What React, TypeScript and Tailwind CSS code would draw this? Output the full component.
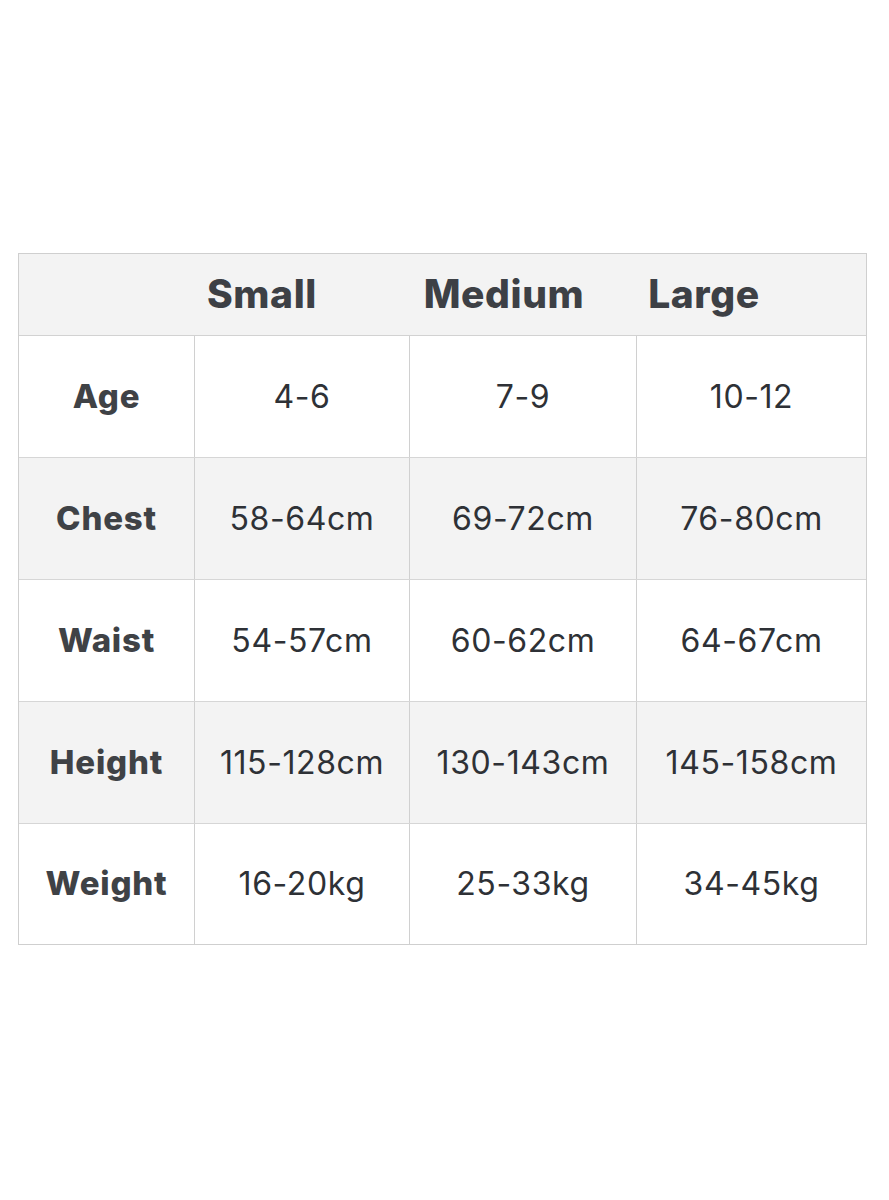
const headers = [
  { label: '', w: 'w-[122px]' },
  { label: 'Small', w: 'w-[242px]' },
  { label: 'Medium', w: 'w-[242px]' },
  { label: 'Large', w: 'w-[158px]' }
]

const rows = [
  { name: 'Age', values: ['4-6', '7-9', '10-12'] },
  { name: 'Chest', values: ['58-64cm', '69-72cm', '76-80cm'] },
  { name: 'Waist', values: ['54-57cm', '60-62cm', '64-67cm'] },
  { name: 'Height', values: ['115-128cm', '130-143cm', '145-158cm'] },
  { name: 'Weight', values: ['16-20kg', '25-33kg', '34-45kg'] }
]

const App = () => {
  return (
    <div
      className="w-[889px] h-[1200px] bg-white pt-[253px] pl-[18px]"
      style={{ fontFamily: 'Inter, "Open Sans", sans-serif' }}
    >
      <div className="w-[849px] border border-[#cfcfcf]">
        {/* cabeçalho */}
        <div className="flex h-[82px] items-center bg-[#f3f3f3] border-b border-[#d2d2d2]">
          {headers.map((h, i) => (
            <div
              key={i}
              className={`${h.w} text-center text-[39px] font-extrabold text-[#3d4045] tracking-[0.6px]`}
            >
              {h.label}
            </div>
          ))}
        </div>

        {rows.map((row, i) => (
          <div
            key={row.name}
            className={`grid grid-cols-[176px_215px_227px_1fr] ${
              i === rows.length - 1 ? 'h-[120px]' : 'h-[122px]'
            } ${i % 2 === 1 ? 'bg-[#f3f3f3]' : 'bg-white'} ${
              i < rows.length - 1 ? 'border-b border-[#d6d6d6]' : ''
            }`}
          >
            <div className="flex items-center justify-center border-r border-[#d0d0d0] text-[33px] font-extrabold text-[#3f4246] tracking-[0.8px]">
              {row.name}
            </div>
            {row.values.map((v, j) => (
              <div
                key={j}
                className={`flex items-center justify-center text-[32px] text-[#2e3136] tracking-[0.6px] ${
                  j < 2 ? 'border-r border-[#d0d0d0]' : ''
                }`}
              >
                {v}
              </div>
            ))}
          </div>
        ))}
      </div>
    </div>
  )
}

export default App
